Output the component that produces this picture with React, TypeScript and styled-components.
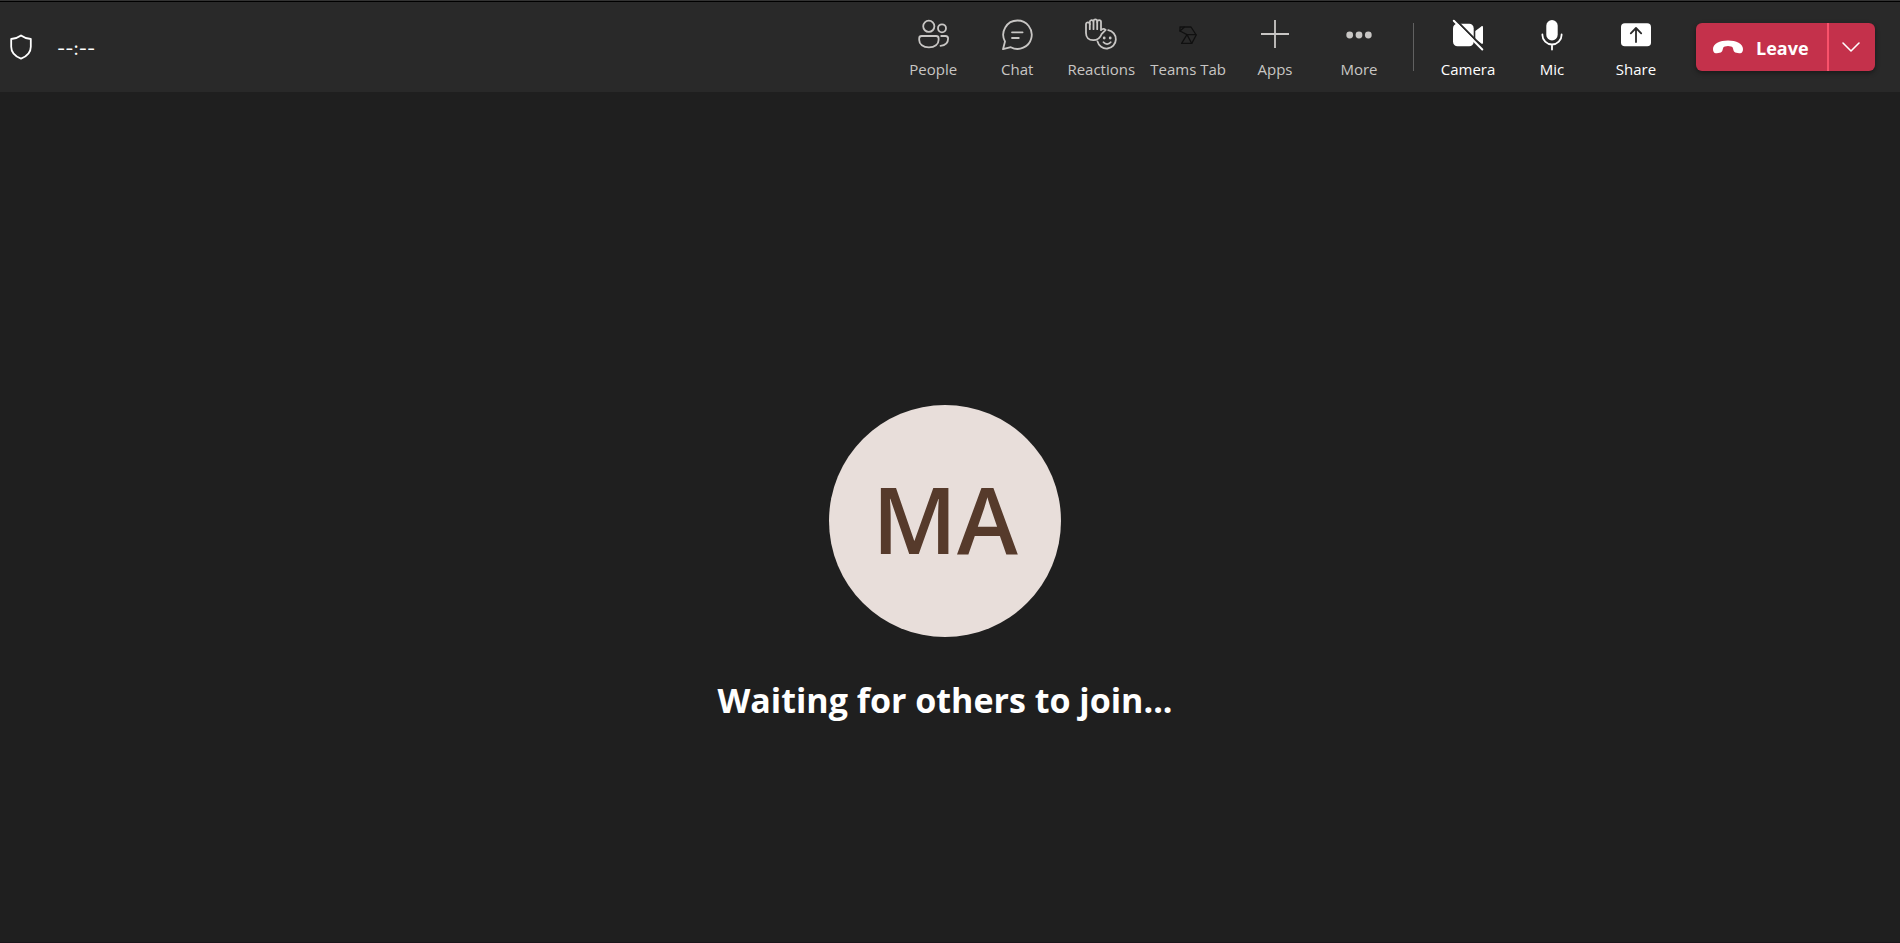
import React from 'react';
import styled, { createGlobalStyle } from 'styled-components';

const GlobalStyle = createGlobalStyle`
  *, *::before, *::after { box-sizing: border-box; }
  body {
    margin: 0;
    background: #1f1f1f;
    color: #ffffff;
    font-family: "Open Sans", "Noto Sans", sans-serif;
  }
  button { font-family: inherit; cursor: pointer; }
`;

const Page = styled.div`
  display: flex;
  flex-direction: column;
  min-height: 100vh;
  border-top: 1px solid #333333;
  border-bottom: 1px solid #1a151a;
`;

const Header = styled.header`
  display: flex;
  align-items: center;
  justify-content: space-between;
  height: 91px;
  padding: 0 25px 0 9px;
  border-top: 1px solid #000000;
  background: #292929;
`;

const Status = styled.div`
  display: flex;
  align-items: center;
  gap: 24px;
`;

const Timer = styled.span`
  padding-top: 4px;
  font-family: "Inter", sans-serif;
  font-size: 18px;
  line-height: 24px;
`;

const Controls = styled.div`
  display: flex;
  align-items: center;
`;

const Group = styled.div`
  display: flex;
`;

const Tool = styled.button<{ $strong?: boolean }>`
  display: flex;
  flex-direction: column;
  align-items: center;
  gap: 6px;
  min-width: 84px;
  padding: 6px 7px 0;
  border: 0;
  background: none;
  color: ${(p) => (p.$strong ? '#ffffff' : '#c8c6c4')};
  font-size: 15px;
  line-height: 24px;
  white-space: nowrap;
`;

const Divider = styled.div`
  width: 1px;
  height: 48px;
  margin: 0 12px;
  background: #616161;
`;

const LeaveGroup = styled.div`
  display: flex;
  height: 48px;
  margin-left: 18px;
  border-radius: 6px;
  overflow: hidden;
  background: #c4314b;
  box-shadow: 0 2px 5px rgba(0, 0, 0, 0.4);
`;

const LeaveButton = styled.button`
  display: flex;
  align-items: center;
  gap: 12px;
  width: 131px;
  padding: 2px 0 0 16px;
  border: 0;
  background: none;
  color: #ffffff;
  font-size: 18px;
  font-weight: 700;
`;

const LeaveMenuButton = styled.button`
  display: flex;
  align-items: center;
  justify-content: center;
  width: 48px;
  padding: 0 2px 0 0;
  border: 0;
  border-left: 2px solid #f9526b;
  background: none;
  color: #ffffff;
`;

const Stage = styled.main`
  flex: 1;
  display: flex;
  flex-direction: column;
  align-items: center;
  justify-content: center;
  gap: 39px;
  padding: 94px 10px 0 0;
`;

const Avatar = styled.div`
  display: flex;
  align-items: center;
  justify-content: center;
  width: 232px;
  height: 232px;
  padding-bottom: 4px;
  border-radius: 50%;
  background: #e8deda;
  color: #563a2b;
  font-size: 92px;
  font-weight: 600;
  line-height: 120px;
`;

const Message = styled.h1`
  margin: 0;
  font-size: 34px;
  font-weight: 700;
  line-height: 48px;
`;

const Glyph = styled.svg`
  display: block;
  flex: none;
  overflow: visible;
  fill: none;
  stroke: currentColor;
  stroke-width: 1.8;
  stroke-linecap: round;
  stroke-linejoin: round;
`;

function Icon({ children, w = 32, h = 32 }: { children: React.ReactNode; w?: number; h?: number }) {
  return (
    <Glyph width={w} height={h} viewBox={`0 0 ${w} ${h}`} aria-hidden="true">
      {children}
    </Glyph>
  );
}

const ShieldIcon = () => (
  <Icon w={24} h={26}>
    <path d="M12 1.5C9.300 3.500 6 4.700 2.200 5v7.800c0 5.600 3.600 9.500 9.800 11.800 6.200-2.300 9.800-6.200 9.800-11.800V5C18 4.700 14.700 3.500 12 1.500Z" />
  </Icon>
);

const PeopleIcon = () => (
  <Icon>
    <circle cx="11.800" cy="7.300" r="5.600" />
    <circle cx="25" cy="9.300" r="4" />
    <path d="M4.600 17h14.600a2.400 2.400 0 0 1 2.400 2.400v1.600c0 4.300-3.800 7.300-9.700 7.300s-9.700-3-9.700-7.300v-1.600A2.400 2.400 0 0 1 4.600 17Z" />
    <path d="M24.200 17h4.300a2.600 2.600 0 0 1 2.600 2.600c0 4.400-2.800 6.900-7.600 7.200" />
  </Icon>
);

const ChatIcon = () => (
  <Icon>
    <path d="M16.500 1.500a14.200 14.200 0 1 1-6.700 26.700L2 30.200l2-7.700A14.200 14.200 0 0 1 16.500 1.500Z" />
    <path d="M11 13.300h10.600M11 19h6.800" />
  </Icon>
);

const ReactionsIcon = () => (
  <Icon>
    <path d="M1 14V5.200a1.900 1.900 0 0 1 3.800 0V3a1.900 1.900 0 0 1 3.700-.6V1.900a1.900 1.900 0 0 1 3.700 0V3a1.900 1.900 0 0 1 3.800 0v8.200c1.200-1.400 3.100-1.600 4.700-.3l-4.200 4.300c-1.500 4.200-4 6-8.200 6C3.800 21.200 1 18.600 1 14Z" />
    <path d="M4.800 4.800v5.400M8.500 2.800v7.400M12.200 2.800v7.400" />
    <path d="M23.200 11.100a9.300 9.300 0 1 1-10.700 11.300" />
    <path d="M18.500 23.300c1.900 2.400 5.300 2.400 7.200 0" />
    <g fill="currentColor" stroke="none">
      <circle cx="19.200" cy="19" r="1.400" />
      <circle cx="25.200" cy="19" r="1.400" />
    </g>
  </Icon>
);

const TeamsTabIcon = () => (
  <Icon>
    <g stroke="#101010" strokeWidth="1.300">
      <path d="M8 8h11l5.200 8-4.400 8.400H9.600L15 15.600 8 12Z" />
      <path d="M8 12l4.200-3.800M15 15.600h9M15 15.600l4.600 8.600" />
    </g>
  </Icon>
);

const PlusIcon = () => (
  <Icon>
    <path strokeLinecap="butt" d="M16 1v28M2 15h28" />
  </Icon>
);

const MoreIcon = () => (
  <Icon>
    <g fill="currentColor" stroke="none">
      <circle cx="6.700" cy="16" r="3.400" />
      <circle cx="16" cy="16" r="3.400" />
      <circle cx="25.300" cy="16" r="3.400" />
    </g>
  </Icon>
);

const CameraOffIcon = () => (
  <Icon>
    <rect x="1" y="4.700" width="20.700" height="22.600" rx="4.500" fill="currentColor" stroke="none" />
    <path d="M23.300 12l6-4.600c.8-.6 1.700-.2 1.700.8v15.600c0 1-.9 1.400-1.700.8l-6-4.600Z" fill="currentColor" stroke="none" />
    <path d="M2.600 -.2L32 29.500" stroke="#292929" strokeWidth="2" />
    <path d="M1.800 1.700L30.300 30.500" strokeWidth="2" />
  </Icon>
);

const MicIcon = () => (
  <Icon>
    <rect x="10.300" y="1" width="11.400" height="20.400" rx="5.700" fill="currentColor" stroke="none" />
    <path d="M6.400 15.500v.4a9.600 9.600 0 0 0 19.200 0v-.4M16 25.600v5" />
  </Icon>
);

const ShareIcon = () => (
  <Icon>
    <rect x="1" y="4.200" width="30" height="23" rx="3.800" fill="currentColor" stroke="none" />
    <path d="M16 23V9.400M10.800 14.300L16 9l5.200 5.300" stroke="#292929" />
  </Icon>
);

const HangUpIcon = () => (
  <Icon>
    <path
      d="M16 8.500c8.300 0 15 3.200 15 8.600 0 2.700-1 4.200-2.800 4.200-1.200 0-3.700-.3-5-.8-1.500-.6-1.700-1.900-2.200-3.900-.3-1.500-.8-2-2-2.200a16 16 0 0 0-6 0c-1.200.2-1.700.7-2 2.200-.5 2-.7 3.300-2.200 3.900-1.300.5-3.800.8-5 .8C2 21.300 1 19.800 1 17.100c0-5.400 6.700-8.600 15-8.600Z"
      fill="currentColor"
      stroke="none"
    />
  </Icon>
);

const ChevronIcon = () => (
  <Icon w={18} h={10}>
    <path d="M1 1l8 8 8-8" strokeWidth="1.600" />
  </Icon>
);

const panels = [
  { label: 'People', Glyph: PeopleIcon },
  { label: 'Chat', Glyph: ChatIcon },
  { label: 'Reactions', Glyph: ReactionsIcon },
  { label: 'Teams Tab', Glyph: TeamsTabIcon },
  { label: 'Apps', Glyph: PlusIcon },
  { label: 'More', Glyph: MoreIcon },
];

const devices = [
  { label: 'Camera', Glyph: CameraOffIcon },
  { label: 'Mic', Glyph: MicIcon },
  { label: 'Share', Glyph: ShareIcon },
];

export default function App() {
  return (
    <>
      <GlobalStyle />
      <Page>
        <Header>
          <Status>
            <ShieldIcon />
            <Timer>--:--</Timer>
          </Status>
          <Controls>
            <Group>
              {panels.map(({ label, Glyph: G }) => (
                <Tool key={label} type="button">
                  <G />
                  {label}
                </Tool>
              ))}
            </Group>
            <Divider />
            <Group>
              {devices.map(({ label, Glyph: G }) => (
                <Tool key={label} type="button" $strong>
                  <G />
                  {label}
                </Tool>
              ))}
            </Group>
            <LeaveGroup>
              <LeaveButton type="button">
                <HangUpIcon />
                Leave
              </LeaveButton>
              <LeaveMenuButton type="button" aria-label="Leave options">
                <ChevronIcon />
              </LeaveMenuButton>
            </LeaveGroup>
          </Controls>
        </Header>
        <Stage>
          <Avatar>MA</Avatar>
          <Message>Waiting for others to join...</Message>
        </Stage>
      </Page>
    </>
  );
}
